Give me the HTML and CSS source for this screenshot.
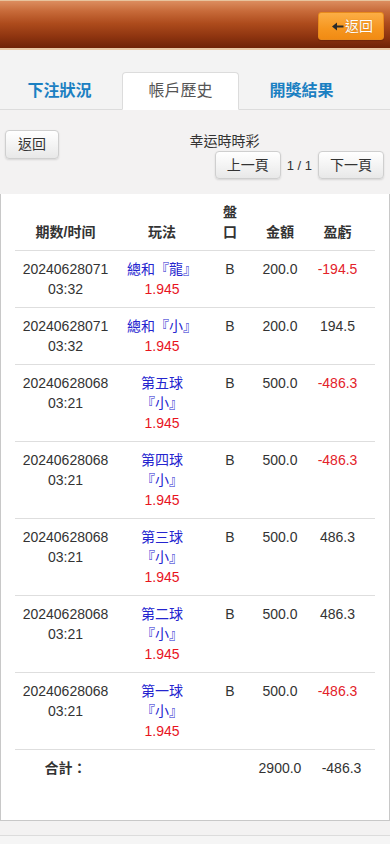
FILE: index.html
```html
<!DOCTYPE html>
<html lang="zh-Hant">
<head>
<meta charset="utf-8">
<meta name="viewport" content="width=device-width, initial-scale=1">
<title>帳戶歷史</title>
<link rel="stylesheet" href="styles.css">
</head>
<body>
<header class="topbar">
  <button class="back-btn" type="button"><svg class="arrow" width="12" height="9" viewBox="0 0 12 9"><path d="M0 4.5 L5 0.5 V3.4 H11.5 V5.6 H5 V8.5 Z" fill="#2a2a2a"/></svg>返回</button>
</header>

<nav class="tabs">
  <a class="tab">下注狀況</a>
  <a class="tab active">帳戶歷史</a>
  <a class="tab">開獎結果</a>
</nav>

<div class="toolbar">
  <button class="btn" type="button">返回</button>
  <div class="toolbar-right">
    <div class="title">幸运時時彩</div>
    <div class="pager">
      <button class="btn" type="button">上一頁</button>
      <span class="page-num">1 / 1</span>
      <button class="btn" type="button">下一頁</button>
    </div>
  </div>
</div>

<div class="panel">
  <table class="records">
    <colgroup>
      <col class="c1"><col class="c2"><col class="c3"><col class="c4"><col class="c5">
    </colgroup>
    <thead>
      <tr>
        <th>期数/时间</th>
        <th>玩法</th>
        <th>盤<br>口</th>
        <th>金額</th>
        <th class="last">盈虧</th>
      </tr>
    </thead>
    <tbody>
      <tr>
        <td>20240628071<br>03:32</td>
        <td><span class="play">總和『龍』</span><br><span class="odds">1.945</span></td>
        <td>B</td>
        <td>200.0</td>
        <td class="last neg">-194.5</td>
      </tr>
      <tr>
        <td>20240628071<br>03:32</td>
        <td><span class="play">總和『小』</span><br><span class="odds">1.945</span></td>
        <td>B</td>
        <td>200.0</td>
        <td class="last">194.5</td>
      </tr>
      <tr>
        <td>20240628068<br>03:21</td>
        <td><span class="play">第五球<br>『小』</span><br><span class="odds">1.945</span></td>
        <td>B</td>
        <td>500.0</td>
        <td class="last neg">-486.3</td>
      </tr>
      <tr>
        <td>20240628068<br>03:21</td>
        <td><span class="play">第四球<br>『小』</span><br><span class="odds">1.945</span></td>
        <td>B</td>
        <td>500.0</td>
        <td class="last neg">-486.3</td>
      </tr>
      <tr>
        <td>20240628068<br>03:21</td>
        <td><span class="play">第三球<br>『小』</span><br><span class="odds">1.945</span></td>
        <td>B</td>
        <td>500.0</td>
        <td class="last">486.3</td>
      </tr>
      <tr>
        <td>20240628068<br>03:21</td>
        <td><span class="play">第二球<br>『小』</span><br><span class="odds">1.945</span></td>
        <td>B</td>
        <td>500.0</td>
        <td class="last">486.3</td>
      </tr>
      <tr>
        <td>20240628068<br>03:21</td>
        <td><span class="play">第一球<br>『小』</span><br><span class="odds">1.945</span></td>
        <td>B</td>
        <td>500.0</td>
        <td class="last neg">-486.3</td>
      </tr>
      <tr class="total">
        <td class="total-label">合計：</td>
        <td></td>
        <td></td>
        <td>2900.0</td>
        <td>-486.3</td>
      </tr>
    </tbody>
  </table>
</div>

<div class="footer"></div>
</body>
</html>
```

FILE: styles.css
```css
* {
  box-sizing: border-box;
}

html, body {
  margin: 0;
  padding: 0;
}

body {
  background: #f3f2f2;
  font-family: "Liberation Sans", Arial, "Noto Sans CJK TC", sans-serif;
  font-size: 14px;
  color: #333;
  width: 390px;
}

/* ---------- top bar ---------- */
.topbar {
  height: 50px;
  border-top: 1px solid #e7c39d;
  border-bottom: 2px solid #e9c9a6;
  background: linear-gradient(to bottom, #dc8d5f 0%, #c76a39 22%, #ad4b1c 48%, #8f3510 75%, #6f2307 100%);
  display: flex;
  justify-content: flex-end;
  align-items: flex-start;
  padding: 11px 6px 0 0;
}

.back-btn {
  height: 28px;
  width: 66px;
  padding: 0 8px 0 13px;
  border: 1px solid #e88a1c;
  border-radius: 3px;
  background: linear-gradient(to bottom, #fcae45 0%, #f6961f 60%, #f18b13 100%);
  color: #fff;
  font-family: "Liberation Sans", "Noto Sans CJK TC", sans-serif;
  font-size: 14px;
  line-height: 26px;
  white-space: nowrap;
  display: flex;
  align-items: center;
  text-shadow: 0 0 1px rgba(120, 60, 0, 0.4);
  box-shadow: 0 1px 1px rgba(0, 0, 0, 0.15);
}

.back-btn .arrow {
  margin-right: 1px;
  flex: none;
}

/* ---------- tabs ---------- */
.tabs {
  display: flex;
  gap: 4px;
  padding: 22px 0 0 1px;
  border-bottom: 1px solid #dcdcdc;
  background: #f3f3f3;
}

.tab {
  width: 117px;
  height: 38px;
  margin-bottom: -1px;
  border: 1px solid transparent;
  border-radius: 4px 4px 0 0;
  text-align: center;
  line-height: 36px;
  font-size: 16px;
  font-weight: bold;
  color: #1b80c2;
}

.tab.active {
  background: #fff;
  border-color: #dcdcdc;
  border-bottom-color: #fff;
  color: #555;
  font-weight: normal;
}

/* ---------- toolbar ---------- */
.toolbar {
  display: flex;
  align-items: flex-start;
  padding: 20px 6px 15px 5px;
}

.btn {
  height: 29px;
  padding: 0 12px;
  border: 1px solid #cfcfcf;
  border-radius: 4px;
  background: linear-gradient(to bottom, #ffffff 0%, #f4f4f4 50%, #e8e8e8 100%);
  box-shadow: 0 1px 2px rgba(0, 0, 0, 0.12);
  font-family: "Liberation Sans", "Noto Sans CJK TC", sans-serif;
  font-size: 14px;
  color: #333;
  line-height: 27px;
  white-space: nowrap;
}

.toolbar-right {
  flex: 1;
  padding-top: 2px;
}

.title {
  text-align: center;
  line-height: 19px;
  padding-left: 6px;
  font-size: 14px;
  color: #333;
}

.pager {
  display: flex;
  justify-content: flex-end;
  align-items: center;
  gap: 6px;
}

.pager .btn {
  height: 28px;
  width: 66px;
  padding: 0;
  line-height: 26px;
}

.page-num {
  font-size: 13px;
  color: #333;
}

/* ---------- panel / table ---------- */
.panel {
  background: #fff;
  border-left: 1px solid #c8c8c8;
  border-right: 1px solid #c8c8c8;
  border-bottom: 1px solid #c8c8c8;
  padding: 0 14px 34px;
}

.records {
  width: 100%;
  border-collapse: collapse;
  table-layout: fixed;
}

.records .c1 { width: 101px; }
.records .c2 { width: 92px; }
.records .c3 { width: 44px; }
.records .c4 { width: 56px; }
.records .c5 { width: 67px; }

.records th,
.records td {
  padding: 8px 4px;
  line-height: 20px;
  text-align: center;
  vertical-align: top;
  border-bottom: 1px solid #dedede;
  color: #333;
  font-size: 14px;
}

.records th {
  font-weight: bold;
  vertical-align: bottom;
}

.records .last {
  padding-right: 12px;
}

.records .play {
  color: #2525cf;
}

.records .odds {
  color: #e8141e;
}

.records .neg {
  color: #e3222a;
}

.records .total td {
  border-bottom: none;
}

.records .total-label {
  font-weight: bold;
}

/* ---------- footer ---------- */
.footer {
  margin-top: 14px;
  border-top: 1px solid #dcdcdc;
  height: 20px;
  background: #f5f5f5;
}
```
